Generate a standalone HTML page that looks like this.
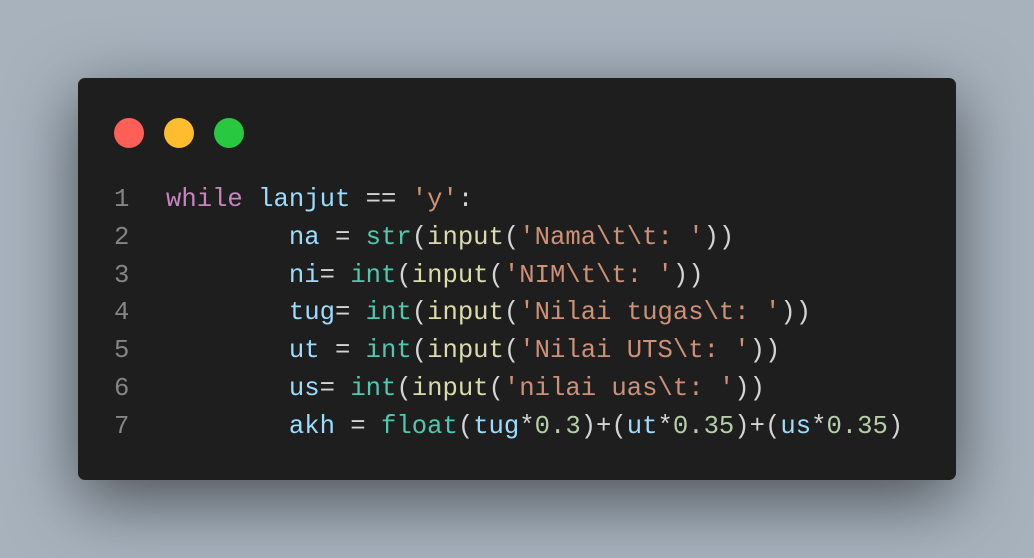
<!DOCTYPE html>
<html><head><style>
html,body{margin:0;padding:0;}
body{width:1034px;height:558px;background:#a7b2bd;position:relative;overflow:hidden;}
.win{position:absolute;left:78px;top:78px;width:878px;height:402px;background:#1e1e1e;border-radius:7px;box-shadow:0 20px 68px rgba(0,0,0,0.55);}
.dot{position:absolute;top:118px;width:30px;height:30px;border-radius:50%;}
pre{position:absolute;margin:0;left:0;top:181px;font-family:"Liberation Mono",monospace;font-size:25.6px;line-height:37.8px;color:#d4d4d4;white-space:pre;}
.ln{position:absolute;left:114px;top:181px;font-family:"Liberation Mono",monospace;font-size:25.6px;line-height:37.8px;color:#858585;margin:0;}
.k{color:#c586c0}.v{color:#9cdcfe}.s{color:#ce9178}.f{color:#dcdcaa}.b{color:#4ec9b0}.n{color:#b5cea8}
</style></head><body>
<div class="win"></div>
<div class="dot" style="left:114px;background:#ff5f57"></div>
<div class="dot" style="left:164px;background:#febc2e"></div>
<div class="dot" style="left:214px;background:#28c840"></div>
<pre class="ln">1
2
3
4
5
6
7</pre>
<pre style="left:166px"><span class="k">while</span> <span class="v">lanjut</span> == <span class="s">'y'</span>:
        <span class="v">na</span> = <span class="b">str</span>(<span class="f">input</span>(<span class="s">'Nama\t\t: '</span>))
        <span class="v">ni</span>= <span class="b">int</span>(<span class="f">input</span>(<span class="s">'NIM\t\t: '</span>))
        <span class="v">tug</span>= <span class="b">int</span>(<span class="f">input</span>(<span class="s">'Nilai tugas\t: '</span>))
        <span class="v">ut</span> = <span class="b">int</span>(<span class="f">input</span>(<span class="s">'Nilai UTS\t: '</span>))
        <span class="v">us</span>= <span class="b">int</span>(<span class="f">input</span>(<span class="s">'nilai uas\t: '</span>))
        <span class="v">akh</span> = <span class="b">float</span>(<span class="v">tug</span>*<span class="n">0.3</span>)+(<span class="v">ut</span>*<span class="n">0.35</span>)+(<span class="v">us</span>*<span class="n">0.35</span>)</pre>
</body></html>
